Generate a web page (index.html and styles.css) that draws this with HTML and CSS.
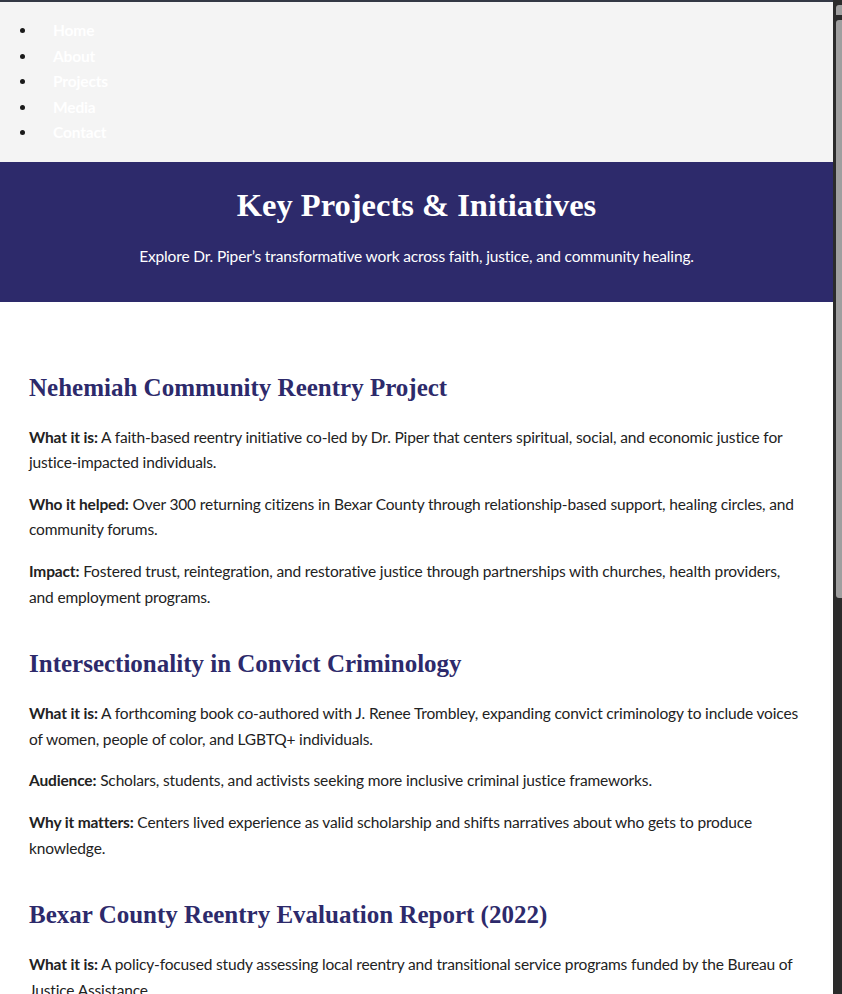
FILE: index.html
```html
<!DOCTYPE html>
<html lang="en">
<head>
<meta charset="utf-8">
<title>Key Projects &amp; Initiatives</title>
<link rel="stylesheet" href="styles.css">
</head>
<body>
<nav class="site-nav">
  <ul class="nav-list">
    <li><a href="#">Home</a></li>
    <li><a href="#">About</a></li>
    <li><a href="#">Projects</a></li>
    <li><a href="#">Media</a></li>
    <li><a href="#">Contact</a></li>
  </ul>
</nav>
<header class="hero">
  <h1 class="hero-title">Key Projects &amp; Initiatives</h1>
  <p class="hero-sub">Explore Dr. Piper’s transformative work across faith, justice, and community healing.</p>
</header>
<main class="content">
  <section class="project">
    <h2 class="project-title">Nehemiah Community Reentry Project</h2>
    <p><strong>What it is:</strong> A faith-based reentry initiative co-led by Dr. Piper that centers spiritual, social, and economic justice for justice-impacted individuals.</p>
    <p><strong>Who it helped:</strong> Over 300 returning citizens in Bexar County through relationship-based support, healing circles, and community forums.</p>
    <p><strong>Impact:</strong> Fostered trust, reintegration, and restorative justice through partnerships with churches, health providers, and employment programs.</p>
  </section>
  <section class="project">
    <h2 class="project-title">Intersectionality in Convict Criminology</h2>
    <p><strong>What it is:</strong> A forthcoming book co-authored with J. Renee Trombley, expanding convict criminology to include voices of women, people of color, and LGBTQ+ individuals.</p>
    <p><strong>Audience:</strong> Scholars, students, and activists seeking more inclusive criminal justice frameworks.</p>
    <p><strong>Why it matters:</strong> Centers lived experience as valid scholarship and shifts narratives about who gets to produce knowledge.</p>
  </section>
  <section class="project">
    <h2 class="project-title">Bexar County Reentry Evaluation Report (2022)</h2>
    <p><strong>What it is:</strong> A policy-focused study assessing local reentry and transitional service programs funded by the Bureau of Justice Assistance.</p>
    <p><strong>Findings:</strong> Identified gaps in housing, employment, and mental health services for people returning home from incarceration.</p>
    <p><strong>Impact:</strong> Informed county-level recommendations for coordinated, community-centered reentry support.</p>
  </section>
  <section class="project">
    <h2 class="project-title">Faith &amp; Justice Community Dialogues</h2>
    <p><strong>What it is:</strong> A series of conversations bringing congregations, advocates, and justice-impacted leaders together.</p>
    <p><strong>Impact:</strong> Built bridges between faith communities and grassroots movements for healing and accountability.</p>
  </section>
</main>
<footer class="site-footer">
  <p>&copy; 2025 Dr. Piper. All rights reserved.</p>
</footer>
<div class="fake-scrollbar" aria-hidden="true">
  <div class="fake-scrollbar-cap"></div>
  <div class="fake-scrollbar-thumb"></div>
</div>
</body>
</html>
```
FILE: styles.css
```css
html {
  background: #ffffff;
  scrollbar-width: none;
}
body {
  margin: 0 9px 0 0;
  font-family: Lato, "Noto Sans", sans-serif;
  font-size: 15.5px;
  letter-spacing: -0.15px;
  line-height: 25.6px;
  color: #222222;
  background: #ffffff;
}
.site-nav {
  background: #f4f4f4;
  border-top: 2px solid #343945;
  padding: 16px 0;
}
.nav-list {
  margin: 0;
  padding-left: 37px;
}
.nav-list li {
  line-height: 25.6px;
  color: #1a1a1a;
}
.nav-list a {
  color: #ffffff;
  font-weight: 700;
  text-decoration: none;
  padding-left: 16px;
}
.hero {
  background: #2d2a6b;
  color: #ffffff;
  text-align: center;
  padding: 24px 16px 32px;
}
.hero-title {
  font-family: "Liberation Serif", serif;
  font-weight: 700;
  font-size: 32.5px;
  letter-spacing: 0;
  line-height: 38px;
  margin: 0 0 20px;
}
.hero-sub {
  margin: 0;
  line-height: 25.6px;
}
.content {
  padding: 70px 27px 40px 29px;
}
.project {
  margin-bottom: 38px;
}
.project-title {
  font-family: "Liberation Serif", serif;
  font-weight: 700;
  font-size: 25px;
  letter-spacing: 0;
  line-height: 31px;
  color: #2d2a6b;
  margin: 0 0 22px;
}
.project p {
  margin: 0 0 16px;
}
.project strong {
  font-weight: 700;
}
.site-footer {
  background: #2d2a6b;
  color: #ffffff;
  text-align: center;
  padding: 24px 16px;
}
.site-footer p {
  margin: 0;
}
.fake-scrollbar {
  position: fixed;
  top: 0;
  right: 0;
  width: 9px;
  height: 100vh;
  background: #2b2b2b;
}
.fake-scrollbar-cap {
  position: absolute;
  top: 5px;
  right: 0;
  width: 6px;
  height: 10px;
  background: #9f9f9f;
  border-radius: 3px 0 0 0;
}
.fake-scrollbar-thumb {
  position: absolute;
  top: 20px;
  right: 0;
  width: 6px;
  height: 578px;
  background: #9f9f9f;
  border-radius: 3px 0 0 3px;
}
```
